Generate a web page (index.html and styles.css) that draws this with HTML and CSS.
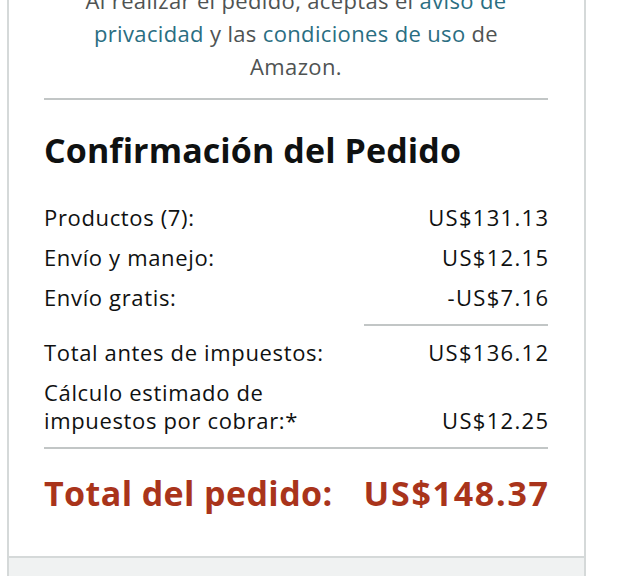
FILE: index.html
```html
<!DOCTYPE html>
<html lang="es">
<head>
<meta charset="utf-8">
<title>Confirmación del Pedido</title>
<link rel="stylesheet" href="styles.css">
</head>
<body>
<div class="card">
  <div class="body">
    <p class="legal">Al realizar el pedido, aceptas el <a href="#">aviso de</a><br><a href="#">privacidad</a> y las <a href="#">condiciones de uso</a> de<br>Amazon.</p>
    <div class="sep"></div>
    <h2 class="title">Confirmación del Pedido</h2>
    <div class="rows">
      <div class="row"><span class="label">Productos (7):</span><span class="amt">US$131.13</span></div>
      <div class="row"><span class="label">Envío y manejo:</span><span class="amt">US$12.15</span></div>
      <div class="row"><span class="label">Envío gratis:</span><span class="amt">-US$7.16</span></div>
      <div class="sep short"></div>
      <div class="row"><span class="label">Total antes de impuestos:</span><span class="amt">US$136.12</span></div>
      <div class="row"><span class="label">Cálculo estimado de<br>impuestos por cobrar:*</span><span class="amt">US$12.25</span></div>
      <div class="sep full"></div>
      <div class="row total"><span class="label">Total del pedido:</span><span class="amt">US$148.37</span></div>
    </div>
  </div>
  <div class="foot"></div>
</div>
</body>
</html>
```

FILE: styles.css
```css
html, body {
  margin: 0;
  padding: 0;
  background: #ffffff;
  height: 100%;
  overflow: hidden;
}
body {
  font-family: "Open Sans", "Noto Sans", sans-serif;
  color: #0f1111;
}
.card {
  margin: -16px 0 0 7px;
  width: 575px;
  border-left: 2px solid #d5d9d9;
  border-right: 2px solid #d5d9d9;
  min-height: 700px;
  display: flex;
  flex-direction: column;
}
.body {
  padding: 0 36px 0 35px;
}
.legal {
  margin: 0;
  text-align: center;
  font-size: 22px;
  letter-spacing: 0.35px;
  line-height: 33px;
  color: #4f5353;
}
.legal a {
  color: #2a6e82;
  text-decoration: none;
}
.sep {
  height: 2px;
  background: #c2c6c6;
  margin-top: 15px;
}
.title {
  margin: 30px 0 0 0;
  font-size: 34px;
  line-height: 40px;
  font-weight: 700;
  letter-spacing: 0.1px;
  color: #0f1111;
}
.rows {
  margin-top: 27px;
  display: flex;
  flex-direction: column;
}
.row {
  display: flex;
  justify-content: space-between;
  align-items: flex-end;
  font-size: 22px;
  line-height: 28px;
  padding: 6px 0;
}
.label {
  letter-spacing: 0.65px;
}
.amt {
  letter-spacing: 1.3px;
  margin-right: -1.3px;
}
.sep.short {
  margin: 7px 0 6px auto;
  width: 184px;
}
.sep.full {
  margin: 7px 0 0 0;
}
.row.total {
  margin-top: 18px;
  font-size: 34px;
  line-height: 40px;
  font-weight: 700;
  color: #a9341b;
}
.row.total .label {
  letter-spacing: 0.4px;
}
.row.total .amt {
  letter-spacing: 1.7px;
  margin-right: -1.7px;
}
.foot {
  margin-top: 37px;
  flex: 1;
  border-top: 2px solid #d5d9d9;
  background: #f0f2f2;
}
```
